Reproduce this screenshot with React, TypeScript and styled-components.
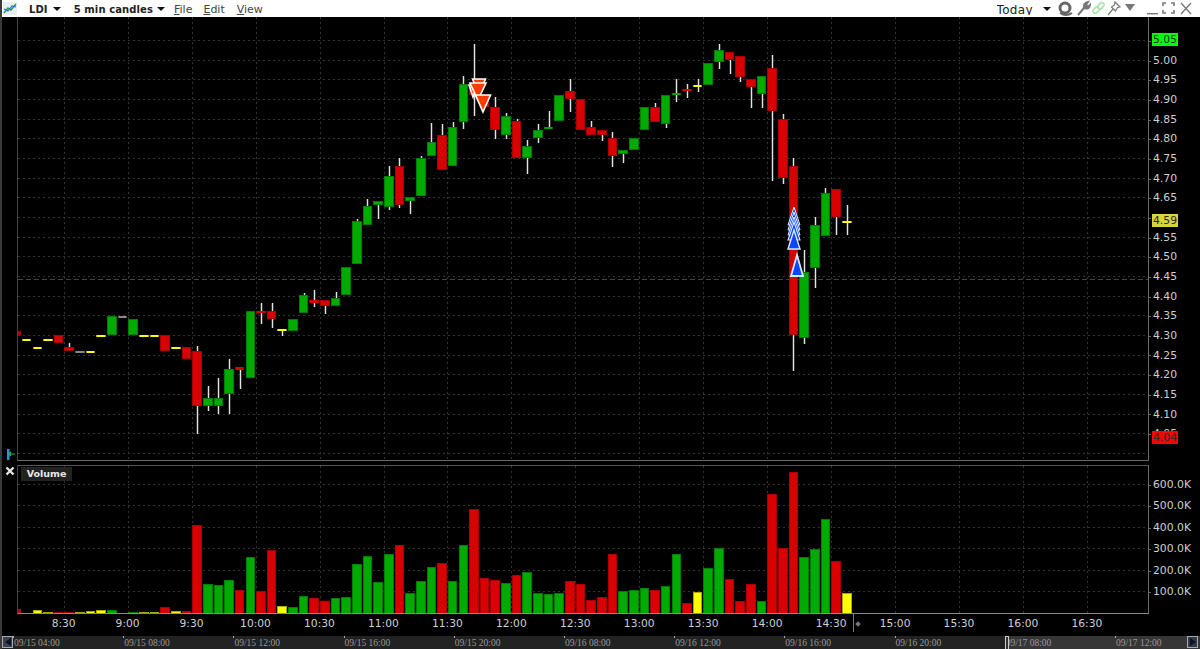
import styled, { createGlobalStyle } from "styled-components";

type Tone = "r" | "g" | "y" | "n";
// body top, body bottom, wick top, wick bottom, colour (page pixels)
const candles: [number, number, number, number, Tone][] = [
  [331, 335, 331, 335, "r"], [339, 341, 339, 341, "y"], [347, 349, 347, 349, "y"], [339, 341, 339, 341, "y"],
  [335, 343, 335, 343, "r"], [347, 351, 343, 351, "r"], [351, 353, 351, 353, "n"], [351, 353, 351, 353, "y"],
  [335, 337, 335, 337, "y"], [316, 335, 316, 335, "g"], [316, 318, 316, 318, "n"], [319, 335, 319, 335, "g"],
  [335, 337, 335, 337, "y"], [335, 337, 335, 337, "y"], [335, 351, 335, 351, "r"], [347, 349, 347, 349, "y"],
  [347, 359, 347, 359, "r"], [351, 406, 346, 434, "r"], [398, 406, 386, 411, "g"], [398, 406, 378, 414, "g"],
  [369, 394, 359, 414, "g"], [367, 370, 367, 389, "r"], [311, 378, 311, 378, "g"], [311, 313, 303, 324, "r"],
  [311, 319, 303, 328, "r"], [329, 331, 329, 336, "y"], [319, 331, 319, 331, "g"], [295, 313, 293, 313, "g"],
  [300, 303, 290, 307, "r"], [300, 306, 300, 314, "r"], [298, 306, 292, 306, "g"], [267, 295, 267, 295, "g"],
  [221, 264, 219, 264, "g"], [206, 225, 199, 225, "g"], [201, 205, 201, 219, "g"], [176, 207, 166, 210, "g"],
  [166, 205, 158, 208, "r"], [197, 201, 197, 214, "g"], [158, 196, 156, 196, "g"], [142, 156, 123, 156, "g"],
  [135, 170, 124, 170, "r"], [127, 166, 122, 166, "g"], [84, 122, 76, 129, "g"], [84, 95, 44, 116, "r"],
  [95, 107, 95, 107, "r"], [107, 130, 97, 139, "r"], [116, 135, 113, 139, "g"], [121, 158, 119, 158, "r"],
  [146, 158, 140, 174, "g"], [130, 138, 124, 143, "g"], [127, 129, 111, 129, "g"], [95, 121, 95, 121, "g"],
  [91, 99, 79, 112, "r"], [99, 130, 99, 130, "r"], [127, 135, 121, 135, "r"], [130, 135, 130, 141, "r"],
  [138, 156, 132, 167, "r"], [150, 154, 150, 163, "g"], [138, 150, 138, 150, "g"], [107, 130, 107, 130, "g"],
  [107, 122, 103, 122, "r"], [95, 124, 95, 128, "g"], [93, 95, 79, 102, "g"], [89, 91, 84, 98, "r"],
  [85, 87, 79, 92, "y"], [63, 85, 63, 85, "g"], [50, 62, 44, 69, "g"], [52, 60, 52, 74, "r"],
  [56, 77, 56, 82, "r"], [79, 87, 79, 108, "r"], [76, 94, 76, 108, "g"], [68, 111, 55, 181, "r"],
  [119, 178, 114, 184, "r"], [166, 335, 158, 371, "r"], [272, 338, 250, 344, "g"], [225, 268, 217, 288, "g"],
  [193, 236, 188, 236, "g"], [189, 217, 189, 235, "r"], [221, 223, 205, 235, "y"],
];

const volumeTops = [
  609, 613, 610, 612, 612, 612, 612, 611, 610, 610, 613, 612, 612, 612, 607, 611, 611, 525, 584, 585, 580, 590, 557,
  591, 550, 606, 607, 596, 598, 600.7, 598, 597, 564, 556, 582, 554, 545, 593, 581, 567, 563, 581, 545, 509, 578, 580,
  583, 575, 572, 593, 594, 593, 581, 584, 600, 597, 554, 591, 590, 588, 590, 586, 554, 603, 592, 568, 548, 579, 601,
  584, 601, 494, 548, 472, 557, 549, 519, 561, 593,
];
const volumeTones: Tone[] = [
  "r", "n", "y", "y", "r", "r", "y", "y", "y", "g", "n", "g", "y", "y", "r", "y", "r", "r", "g", "g", "g", "r", "g",
  "r", "r", "y", "g", "g", "r", "r", "g", "g", "g", "g", "g", "g", "r", "g", "g", "g", "r", "g", "g", "r", "r", "r",
  "g", "r", "g", "g", "g", "g", "r", "r", "r", "r", "r", "g", "g", "g", "r", "g", "g", "r", "y", "g", "g", "r", "r",
  "r", "g", "r", "r", "r", "g", "g", "g", "r", "y",
];

const fills: Record<Tone, string> = { r: "#d80000", g: "#00aa00", y: "#ffff00", n: "#8a8a8a" };
const edges: Record<Tone, string> = { r: "#a80000", g: "#007c00", y: "#a8a800", n: "#5c5c5c" };

const candleX = (i: number) => 16 + 10.65 * i;
const gridXs = Array.from({ length: 17 }, (_, k) => 63.7 + 63.96 * k);
const priceYs = Array.from({ length: 22 }, (_, k) => 40 + 19.665 * k);
const volumeYs = [483.7, 505.2, 526.8, 548.3, 569.8, 591.3];

const prices = [
  "", "5.00", "4.95", "4.90", "4.85", "4.80", "4.75", "4.70", "4.65", "", "4.55", "4.50", "4.45", "4.40",
  "4.35", "4.30", "4.25", "4.20", "4.15", "4.10", "4.05",
];
const volumes = ["600.0K", "500.0K", "400.0K", "300.0K", "200.0K", "100.0K"];
const times = [
  "8:30", "9:00", "9:30", "10:00", "10:30", "11:00", "11:30", "12:00", "12:30", "13:00", "13:30", "14:00", "14:30",
  "15:00", "15:30", "16:00", "16:30",
];
const dates = [
  "09/15 04:00", "09/15 08:00", "09/15 12:00", "09/15 16:00", "09/15 20:00", "09/16 08:00", "09/16 12:00",
  "09/16 16:00", "09/16 20:00", "09/17 08:00", "09/17 12:00",
];
const sells = [
  [479, 79, 13, 15],
  [473, 85, 8, 12],
  [478, 83, 16, 17],
  [483, 95, 15, 17],
];
const buys = [
  [794, 207, 12, 18, 1],
  [794, 212, 12, 18, 1],
  [794, 217, 12, 18, 1],
  [794, 222, 12, 18, 1.1],
  [794, 230, 12, 19, 1.4],
  [797, 255, 12, 21, 1.8],
];

const Global = createGlobalStyle`
  html, body { margin: 0; padding: 0; background: #000; }
  body { font-family: "DejaVu Sans", sans-serif; }
`;

const Window = styled.div`
  width: 1200px;
  height: 649px;
  box-sizing: border-box;
  border-left: 2px solid #3a3a3a;
  background: #000;
  display: flex;
  flex-direction: column;
  overflow: hidden;
  position: relative;
`;

const TitleBar = styled.div`
  height: 17px;
  flex: none;
  margin-left: -2px;
  background: #fff;
  display: flex;
  align-items: center;
  overflow: hidden;
  color: #222;
  font-size: 11px;
`;

const AppIcon = styled.svg`
  width: 14px;
  height: 13px;
  margin: 0 12px 0 3px;
  flex: none;
`;

const Picker = styled.span<{ $gap: number }>`
  font-weight: 700;
  letter-spacing: 0.1px;
  font-size: 10px;
  padding-top: 1px;
  margin-right: ${(p) => p.$gap}px;
  white-space: nowrap;
`;

const Caret = styled.span<{ $gap: number }>`
  width: 0;
  height: 0;
  border-left: 4px solid transparent;
  border-right: 4px solid transparent;
  border-top: 4px solid #111;
  margin-right: ${(p) => p.$gap}px;
  flex: none;
`;

const MenuItem = styled.span<{ $gap: number }>`
  color: #444;
  padding-top: 1px;
  margin-right: ${(p) => p.$gap}px;
  u { text-underline-offset: 1px; }
`;

const TitleRight = styled.div`
  margin-left: auto;
  padding-right: 5px;
  display: flex;
  align-items: center;
  height: 17px;
`;

// the bar clips the tail of the y in the original
const Today = styled.span`
  font-size: 12px;
  letter-spacing: 0.35px;
  color: #222;
  height: 10px;
  line-height: 10px;
  overflow: hidden;
  margin: 3px 10px 0 0;
`;

const TitleIcon = styled.svg<{ $w: number }>`
  width: ${(p) => p.$w}px;
  height: 17px;
  flex: none;
`;

const Row = styled.div`
  display: flex;
  flex: none;
`;

const MainRow = styled(Row)`
  height: 444px;
`;

const VolumeRow = styled(Row)`
  height: 149px;
  margin-top: 4px;
`;

const Gutter = styled.div<{ $end?: boolean }>`
  width: 15px;
  flex: none;
  display: flex;
  flex-direction: column;
  align-items: center;
  justify-content: ${(p) => (p.$end ? "flex-end" : "flex-start")};
  padding-bottom: ${(p) => (p.$end ? 1 : 0)}px;
`;

const Plot = styled.div`
  width: 1132px;
  flex: none;
  box-sizing: border-box;
  border-left: 1px solid #444;
  border-right: 1px solid #6a6a6a;
  position: relative;

  svg { display: block; }
`;

const MainPlot = styled(Plot)`
  border-bottom: 1px solid #6a6a6a;
`;

const VolumePlot = styled(Plot)`
  border-top: 1px solid #555;
  border-bottom: 1px solid #8a8a8a;
`;

const VolumeChip = styled.div`
  position: absolute;
  left: 3px;
  top: 1px;
  width: 51px;
  height: 14px;
  background: #222;
  color: #e8e8e8;
  font-size: 9.5px;
  font-weight: 700;
  line-height: 14px;
  text-align: center;
`;

const Axis = styled.div<{ $top: number; $step: number }>`
  flex: 1;
  position: relative;
  display: flex;
  flex-direction: column;
  padding-top: ${(p) => p.$top}px;

  > div {
    height: ${(p) => p.$step}px;
    line-height: ${(p) => p.$step}px;
  }
`;

const AxisLabel = styled.div`
  flex: none;
  position: relative;
  padding-left: 4px;
  font-size: 10.8px;
  color: #cfcfcf;
  white-space: nowrap;

  &::before {
    content: "";
    position: absolute;
    left: 0;
    top: 50%;
    width: 2px;
    height: 1px;
    background: #666;
  }
`;

const PriceFlag = styled.span<{ $top: number; $bg: string }>`
  position: absolute;
  left: 3px;
  top: ${(p) => p.$top}px;
  width: 26px;
  height: 13px;
  line-height: 13px;
  text-align: center;
  font-size: 10.8px;
  color: #2a2a2a;
  background: ${(p) => p.$bg};
`;

const TimeRow = styled.div`
  height: 22px;
  flex: none;
  display: flex;
  align-items: flex-start;
  padding-left: 29.7px;
  position: relative;
`;

const TimeLabel = styled.span`
  width: 63.96px;
  flex: none;
  margin-top: 3px;
  text-align: center;
  font-size: 10.7px;
  line-height: 13px;
  color: #cfcfcf;
`;

const NowMark = styled.span`
  position: absolute;
  left: 851px;
  top: 0;
  width: 1px;
  height: 18px;
  background: #777;

  &::after {
    content: "";
    position: absolute;
    left: 3px;
    top: 8px;
    width: 4px;
    height: 4px;
    background: #777;
    transform: rotate(45deg);
  }
`;

const ScrollBar = styled.div`
  height: 13px;
  flex: none;
  display: flex;
  background: linear-gradient(to right, #222 0, #222 1003px, #363636 1003px);
  position: relative;
`;

const ScrollButton = styled.div<{ $right?: boolean }>`
  width: 11px;
  height: 12px;
  flex: none;
  background: ${(p) => (p.$right ? "#2f3a4a" : "#39434f")};
  border: 1px solid #aaa;
  box-sizing: border-box;
  display: flex;
  align-items: center;
  justify-content: center;
  position: ${(p) => (p.$right ? "absolute" : "static")};
  right: 2px;
  top: 0;

  &::after {
    content: "";
    border-top: 4px solid transparent;
    border-bottom: 4px solid transparent;
    border-left: ${(p) => (p.$right ? "6px solid #0c1220" : "none")};
    border-right: ${(p) => (p.$right ? "none" : "6px solid #0c1220")};
  }
`;

const DateCell = styled.span`
  width: 110.2px;
  flex: none;
  position: relative;
  padding-left: 1px;
  box-sizing: border-box;
  font-family: "Liberation Serif", serif;
  font-size: 9.5px;
  line-height: 14px;
  color: #999;
  white-space: nowrap;

  &::before {
    content: "";
    position: absolute;
    left: 0;
    top: 0;
    width: 1px;
    height: 2px;
    background: #aaa;
  }
`;

const Thumb = styled.span`
  position: absolute;
  left: 1003px;
  top: 0;
  width: 2px;
  height: 13px;
  background: #333;
  border: 1px solid #ccc;
`;

const Candles = () => (
  <>
    {candles.map(([top, bottom, wickTop, wickBottom, tone], i) => {
      const x = candleX(i);
      const left = Math.max(Math.round(x - 4.8), 18);
      const right = Math.round(x + 4.8);
      return (
        <g key={i}>
          {(wickTop < top || wickBottom > bottom) && (
            <>
              <rect x={Math.round(x) - 0.5} y={wickTop} width={2} height={wickBottom - wickTop} fill="#666" />
              <rect x={Math.round(x)} y={wickTop} width={1} height={wickBottom - wickTop} fill="#e4e4e4" />
            </>
          )}
          <rect x={left} y={top} width={right - left} height={bottom - top} fill={edges[tone]} />
          <rect
            x={left + 1}
            y={top + (bottom - top > 3 ? 1 : 0)}
            width={Math.max(right - left - 2, 1)}
            height={Math.max(bottom - top - (bottom - top > 3 ? 2 : 0), 1)}
            fill={fills[tone]}
          />
        </g>
      );
    })}
  </>
);

const GridLines = ({ ys, top, bottom }: { ys: number[]; top: number; bottom: number }) => (
  <g stroke="#333" strokeWidth={1} strokeDasharray="2 3">
    {gridXs.map((x) => (
      <line key={x} x1={Math.round(x) + 0.5} x2={Math.round(x) + 0.5} y1={top} y2={bottom} />
    ))}
    {ys.map((y) => (
      <line key={y} x1={18} x2={1148} y1={Math.round(y) + 0.5} y2={Math.round(y) + 0.5} />
    ))}
  </g>
);

const Markers = () => (
  <>
    {sells.map(([x, y, w, h], i) => (
      <polygon
        key={i}
        points={`${x - w / 2},${y} ${x + w / 2},${y} ${x},${y + h}`}
        fill="#ff3c00"
        stroke="#fff"
        strokeWidth={1.6}
      />
    ))}
    {buys.map(([x, y, w, h, line], i) => (
      <polygon
        key={i}
        points={`${x},${y} ${x + w / 2},${y + h} ${x - w / 2},${y + h}`}
        fill="#0a46ff"
        stroke="#dbe6ff"
        strokeWidth={line}
      />
    ))}
  </>
);

export default function App() {
  return (
    <>
      <Global />
      <Window>
        <TitleBar>
          <AppIcon viewBox="0 0 14 13">
            <rect x="0" y="0" width="14" height="13" fill="#e8eef6" />
            <path d="M1 11 L5 6 L8 8 L13 2" stroke="#1f9a3a" strokeWidth="1.4" fill="none" />
            <path d="M1 7 L5 9 L9 4 L13 5" stroke="#2a6fd0" strokeWidth="1.2" fill="none" />
          </AppIcon>
          <Picker $gap={5}>LDI</Picker>
          <Caret $gap={13} />
          <Picker $gap={4}>5 min candles</Picker>
          <Caret $gap={9} />
          <MenuItem $gap={11}>
            <u>F</u>ile
          </MenuItem>
          <MenuItem $gap={12}>
            <u>E</u>dit
          </MenuItem>
          <MenuItem $gap={0}>
            <u>V</u>iew
          </MenuItem>
          <TitleRight>
            <Today>Today</Today>
            <Caret $gap={6} />
            <TitleIcon $w={18} viewBox="0 0 18 17">
              <circle cx="8" cy="8" r="5" fill="none" stroke="#666" strokeWidth="3" />
              <path d="M3 13 Q9 17 15 13" fill="none" stroke="#666" strokeWidth="2" />
            </TitleIcon>
            <TitleIcon $w={16} viewBox="0 0 16 17">
              <path d="M3 15 L9 8 M9 8 Q8 3 13 2 L11 5 L13 7 L15 5 Q14 10 9 8" stroke="#777" strokeWidth="2" fill="#777" />
            </TitleIcon>
            <TitleIcon $w={15} viewBox="0 0 15 17">
              <g fill="none" stroke="#a8e6a8" strokeWidth="1.6">
                <rect x="1.5" y="8" width="7" height="4.5" rx="2.2" transform="rotate(-45 5 10)" />
                <rect x="6.5" y="3.5" width="7" height="4.5" rx="2.2" transform="rotate(-45 10 6)" />
              </g>
            </TitleIcon>
            <TitleIcon $w={17} viewBox="0 0 17 17">
              <path d="M9 2 L14 7 L11.5 7.5 L9.5 11 L5.5 7 L8.5 5 Z M7 9 L2 15" fill="none" stroke="#777" strokeWidth="1.2" />
            </TitleIcon>
            <TitleIcon $w={22} viewBox="0 0 22 17">
              <path d="M2 4 H12 L7 11 Z" fill="#777" />
            </TitleIcon>
            <TitleIcon $w={16} viewBox="0 0 16 17">
              <rect x="2" y="13" width="11" height="1.4" fill="#777" />
            </TitleIcon>
            <TitleIcon $w={17} viewBox="0 0 17 17">
              <path d="M2 6 V3 H5 M10 3 H13 V6 M13 10 V13 H10 M5 13 H2 V10" fill="none" stroke="#777" strokeWidth="1.6" />
            </TitleIcon>
            <TitleIcon $w={17} viewBox="0 0 17 17">
              <path d="M3 3 L13 14 M13 3 L3 14" stroke="#777" strokeWidth="1.3" />
            </TitleIcon>
          </TitleRight>
        </TitleBar>

        <MainRow>
          <Gutter $end>
            <svg width="10" height="11" viewBox="0 0 10 11">
              <rect x="2" y="0" width="2.5" height="11" fill="#2a8fe0" />
              <path d="M4 5 H10 M4 5 L6 3 M4 5 L6 7" stroke="#0cc050" strokeWidth="1.2" />
            </svg>
          </Gutter>
          <MainPlot>
            <svg width="1130" height="443" viewBox="18 17 1130 443">
              <GridLines ys={priceYs} top={17} bottom={460} />
              <line x1={18} x2={1148} y1={279.5} y2={279.5} stroke="#444" strokeDasharray="5 3" />
              <Candles />
              <Markers />
            </svg>
          </MainPlot>
          <Axis $top={14.17} $step={19.665}>
            {prices.map((p, i) => (
              <AxisLabel key={i}>{p}</AxisLabel>
            ))}
            <PriceFlag $top={16} $bg="#00ff00">5.05</PriceFlag>
            <PriceFlag $top={197} $bg="#d6d63c">4.59</PriceFlag>
            <PriceFlag $top={414} $bg="#ff0000">4.04</PriceFlag>
          </Axis>
        </MainRow>

        <VolumeRow>
          <Gutter>
            <svg width="10" height="10" viewBox="0 0 10 10" style={{ marginTop: 1 }}>
              <path d="M1.5 1.5 L8.5 8.5 M8.5 1.5 L1.5 8.5" stroke="#e4e4e4" strokeWidth="2.4" />
            </svg>
          </Gutter>
          <VolumePlot>
            <svg width="1130" height="147" viewBox="18 466 1130 147">
              <GridLines ys={volumeYs} top={466} bottom={613} />
              {volumeTops.map((top, i) => {
                const tone = volumeTones[i];
                const left = Math.max(Math.round(candleX(i) - 4.8), 18);
                const width = Math.round(candleX(i) + 4.8) - left;
                return (
                  <g key={i}>
                    <rect x={left} y={top} width={width} height={613 - top} fill={edges[tone]} />
                    <rect x={left + 1} y={top + 1} width={Math.max(width - 2, 1)} height={Math.max(612 - top, 0)} fill={fills[tone]} />
                  </g>
                );
              })}
            </svg>
            <VolumeChip>Volume</VolumeChip>
          </VolumePlot>
          <Axis $top={8.9} $step={21.52}>
            {volumes.map((v) => (
              <AxisLabel key={v}>{v}</AxisLabel>
            ))}
          </Axis>
        </VolumeRow>

        <TimeRow>
          {times.map((t) => (
            <TimeLabel key={t}>{t}</TimeLabel>
          ))}
          <NowMark />
        </TimeRow>

        <ScrollBar>
          <ScrollButton />
          {dates.map((d) => (
            <DateCell key={d}>{d}</DateCell>
          ))}
          <Thumb />
          <ScrollButton $right />
        </ScrollBar>
      </Window>
    </>
  );
}
